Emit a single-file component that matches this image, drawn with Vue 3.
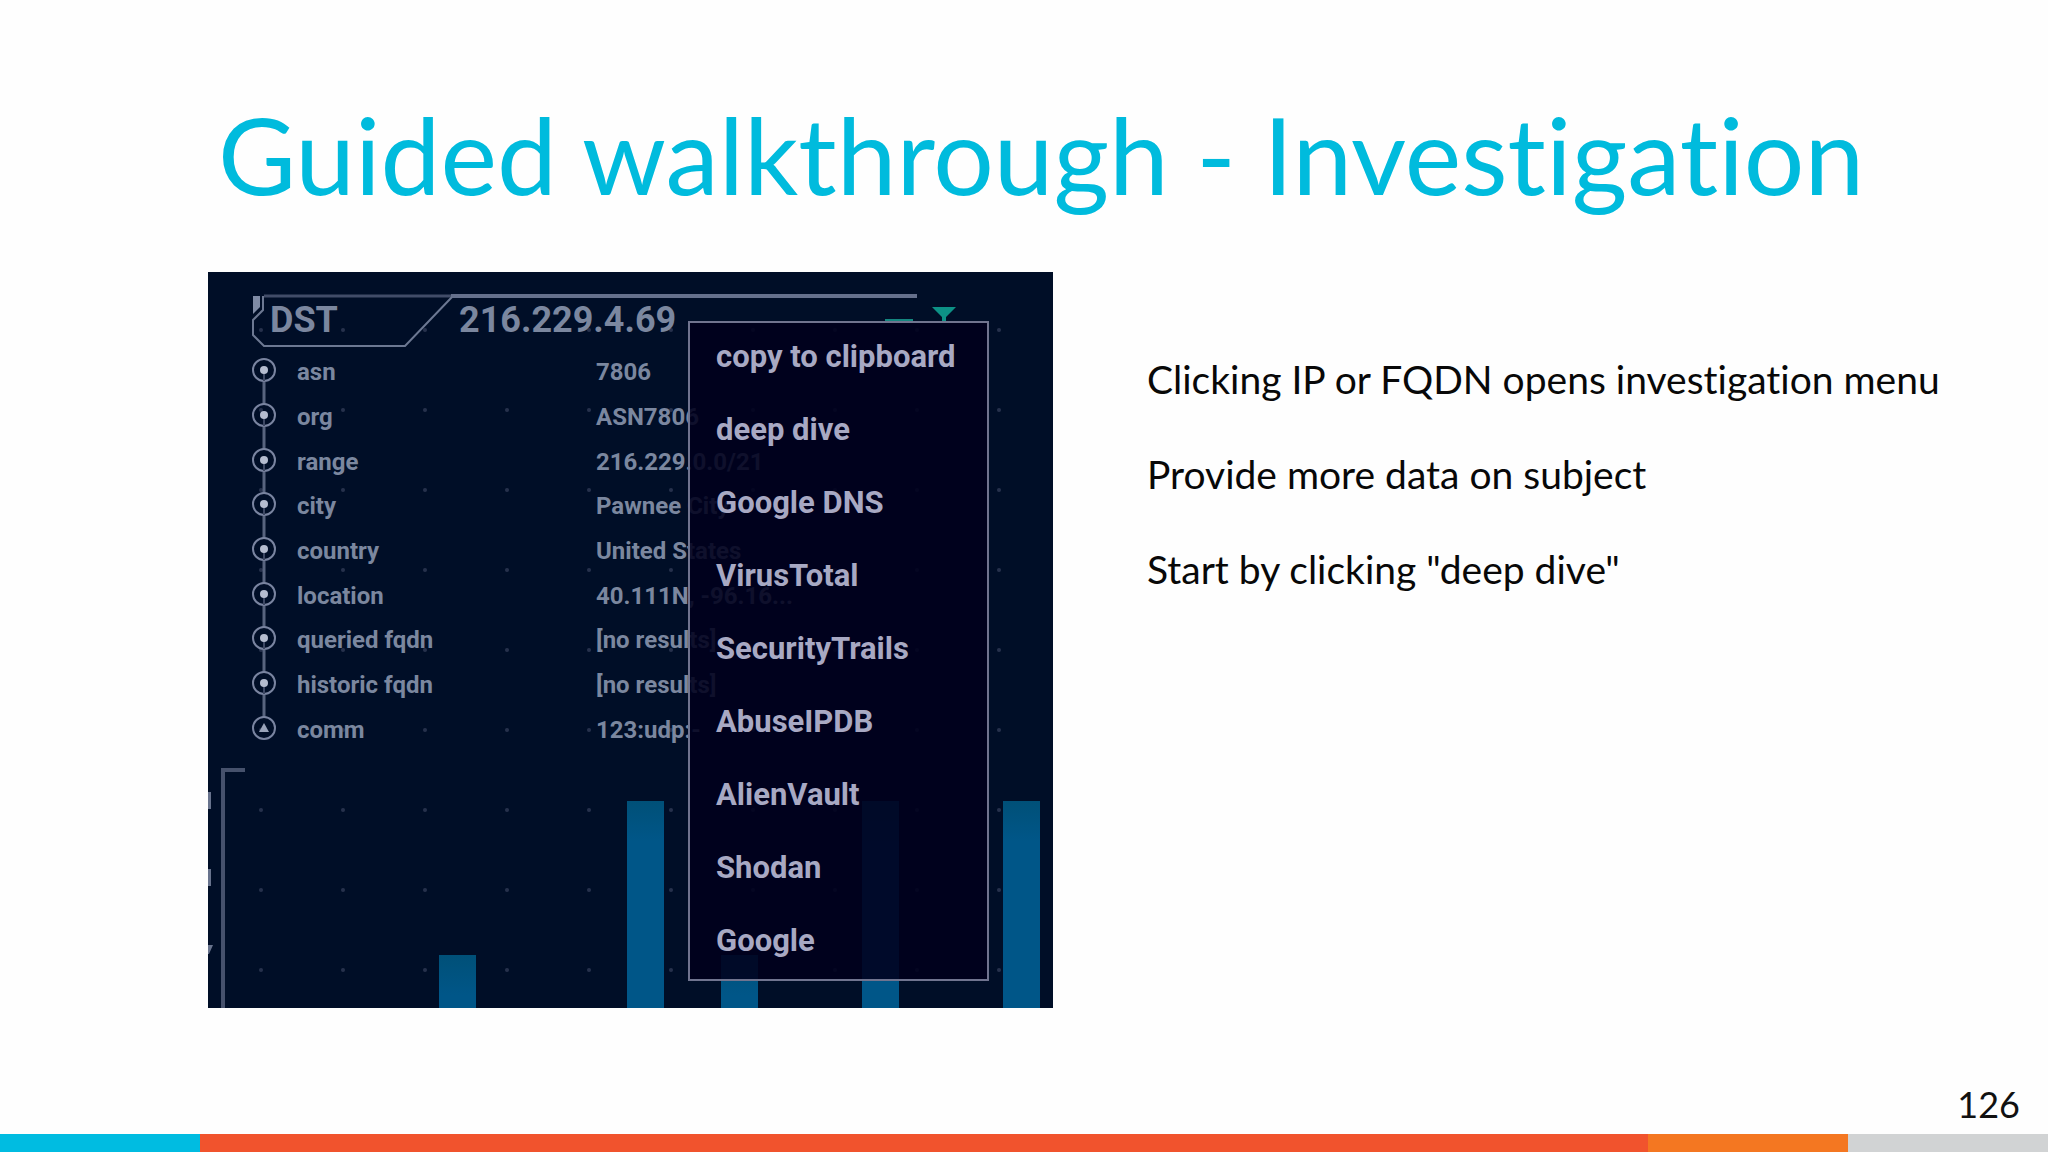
<template>
  <main class="slide">
    <h1 class="title">Guided walkthrough - Investigation</h1>

    <div class="content">
      <section class="panel">
        <svg class="dots" width="100%" height="100%" aria-hidden="true">
          <defs>
            <pattern id="dot-grid" x="12" y="18" width="82" height="80" patternUnits="userSpaceOnUse">
              <circle cx="41" cy="40" r="2" fill="#26314c" />
            </pattern>
          </defs>
          <rect width="100%" height="100%" fill="url(#dot-grid)" />
        </svg>

        <header class="panel-header">
          <svg class="frame" width="720" height="56" viewBox="0 0 720 56" aria-hidden="true">
            <path d="M12 2H200" fill="none" stroke="#414c68" stroke-width="3" />
            <path d="M199 2H665" fill="none" stroke="#65708c" stroke-width="4" />
            <path d="M11 2V16L1 26V41L12 52H153L200 3" fill="none" stroke="#6c7892" stroke-width="2" />
            <path d="M1 2H8V13L1 20Z" fill="#7f8ba5" />
            <path d="M633 27H661" stroke="#14867f" stroke-width="4" />
            <path d="M680 13H704L694 23V29H690V23Z" fill="#0d9186" />
          </svg>
          <span class="side">DST</span>
          <span class="ip">216.229.4.69</span>
        </header>

        <table class="facts">
          <tbody>
            <tr v-for="(fact, index) in facts" :key="fact.label">
              <th scope="row">
                <div class="label">
                  <svg class="node" width="24" height="44" viewBox="0 0 24 44" aria-hidden="true">
                    <path v-if="index < facts.length - 1" d="M12 34V56" stroke="#58647f" stroke-width="3" />
                    <circle cx="12" cy="22" r="11" fill="none" stroke="#7984a0" stroke-width="2" />
                    <path v-if="index < facts.length - 1" d="M12 22V33" stroke="#3c4763" stroke-width="2" />
                    <circle v-if="index < facts.length - 1" cx="12" cy="22" r="4" fill="#b4bccf" />
                    <path v-else d="M12 17L17 26H7Z" fill="#99a3b9" />
                  </svg>
                  <span>{{ fact.label }}</span>
                </div>
              </th>
              <td>{{ fact.value }}</td>
            </tr>
          </tbody>
        </table>

        <div class="chart">
          <svg class="axis" width="40" height="241" viewBox="0 0 40 241" aria-hidden="true">
            <path d="M37 3H15V241" fill="none" stroke="#46516c" stroke-width="4" />
            <path d="M0 25H3V42H0ZM0 102H3V119H0ZM0 178H5L1 187H0Z" fill="#68738d" />
          </svg>
          <div v-for="(bar, index) in bars" :key="index" class="bar" :style="{ height: bar + '%' }"></div>
        </div>

        <ul class="menu">
          <li v-for="item in menuItems" :key="item">
            <button type="button">{{ item }}</button>
          </li>
        </ul>
      </section>

      <section class="notes">
        <p v-for="note in notes" :key="note">{{ note }}</p>
      </section>
    </div>

    <footer>
      <div class="page-number">126</div>
      <div class="stripe">
        <span class="cyan"></span>
        <span class="red"></span>
        <span class="orange"></span>
        <span class="gray"></span>
      </div>
    </footer>
  </main>
</template>

<script setup>
const facts = [
  { label: 'asn', value: '7806' },
  { label: 'org', value: 'ASN7806' },
  { label: 'range', value: '216.229.0.0/21' },
  { label: 'city', value: 'Pawnee City' },
  { label: 'country', value: 'United States' },
  { label: 'location', value: '40.111N, -96.16...' },
  { label: 'queried fqdn', value: '[no results]' },
  { label: 'historic fqdn', value: '[no results]' },
  { label: 'comm', value: '123:udp:-' }
]

const menuItems = [
  'copy to clipboard',
  'deep dive',
  'Google DNS',
  'VirusTotal',
  'SecurityTrails',
  'AbuseIPDB',
  'AlienVault',
  'Shodan',
  'Google'
]

// bar heights in percent of the chart
const bars = [0, 0, 0, 0, 22, 0, 0, 0, 86, 0, 22, 0, 0, 86, 0, 0, 86]

const notes = [
  'Clicking IP or FQDN opens investigation menu',
  'Provide more data on subject',
  'Start by clicking "deep dive"'
]
</script>

<style>
body {
  margin: 0;
  background: #fefefe;
}
</style>

<style scoped>
.slide {
  min-height: 100vh;
  display: flex;
  flex-direction: column;
  font-family: Lato, "Liberation Sans", sans-serif;
  font-variant-ligatures: none;
  color: #111;
}

.title {
  margin: 0;
  padding: 92px 100px 0 218px;
  font-size: 107px;
  line-height: 124px;
  font-weight: 400;
  color: #00bbdd;
  white-space: nowrap;
}

.content {
  display: grid;
  grid-template-columns: minmax(0, 845fr) minmax(0, 801fr);
  gap: 94px;
  align-items: start;
  padding: 56px 100px 0 208px;
}

.panel {
  position: relative;
  display: flex;
  flex-direction: column;
  box-sizing: border-box;
  min-height: 736px;
  padding-top: 22px;
  overflow: hidden;
  background: #000e27;
  color: #7b879f;
  font-family: Roboto, "Liberation Sans", sans-serif;
  font-weight: 700;
}

.dots {
  position: absolute;
  inset: 0;
}

.panel-header {
  position: relative;
  display: grid;
  grid-template-columns: 189px 1fr;
  height: 54px;
  padding-left: 62px;
  font-size: 36px;
  line-height: 52px;
}

.frame {
  position: absolute;
  top: 0;
  left: 44px;
}

.facts {
  position: relative;
  height: 402px;
  border-collapse: collapse;
  font-size: 24px;
  line-height: 28px;
}

.facts th,
.facts td {
  padding: 0;
  text-align: left;
  white-space: nowrap;
}

.facts th {
  width: 388px;
}

.facts td {
  padding-top: 4px;
}

.label {
  display: flex;
  align-items: center;
  gap: 21px;
  height: 44px;
  padding-left: 44px;
}

.label span {
  padding-top: 4px;
}

.node {
  overflow: visible;
}

.chart {
  position: relative;
  flex: 1;
  display: grid;
  grid-template-columns: repeat(17, 1fr);
  align-items: end;
  gap: 10px;
  margin-top: 17px;
  padding: 0 13px 0 43px;
}

.axis {
  position: absolute;
  top: 0;
  left: 0;
}

.bar {
  background: linear-gradient(#005078, #005688 40px);
}

.menu {
  position: absolute;
  top: 49px;
  left: 480px;
  display: flex;
  flex-direction: column;
  box-sizing: border-box;
  width: 301px;
  height: 660px;
  margin: 0;
  padding: 0;
  border: 2px solid #70748f;
  background: rgba(0, 0, 28, 0.88);
  list-style: none;
}

.menu li {
  flex: 1;
  display: flex;
}

.menu button {
  width: 100%;
  padding: 0 0 4px 26px;
  border: none;
  background: none;
  color: #a8a9c3;
  font: inherit;
  font-size: 31px;
  line-height: 36px;
  text-align: left;
  cursor: pointer;
}

.notes {
  display: grid;
  gap: 47px;
  padding-top: 83px;
}

.notes p {
  margin: 0;
  font-size: 39px;
  line-height: 48px;
  white-space: nowrap;
  color: #080808;
}

footer {
  margin-top: auto;
}

.page-number {
  padding: 0 28px 8px;
  font-size: 36px;
  line-height: 44px;
  text-align: right;
}

.stripe {
  display: grid;
  grid-template-columns: 200fr 1448fr 200fr 200fr;
  height: 18px;
}

.cyan {
  background: #00bce1;
}

.red {
  background: #f1532d;
}

.orange {
  background: #f47721;
}

.gray {
  background: #d1d3d4;
}
</style>
